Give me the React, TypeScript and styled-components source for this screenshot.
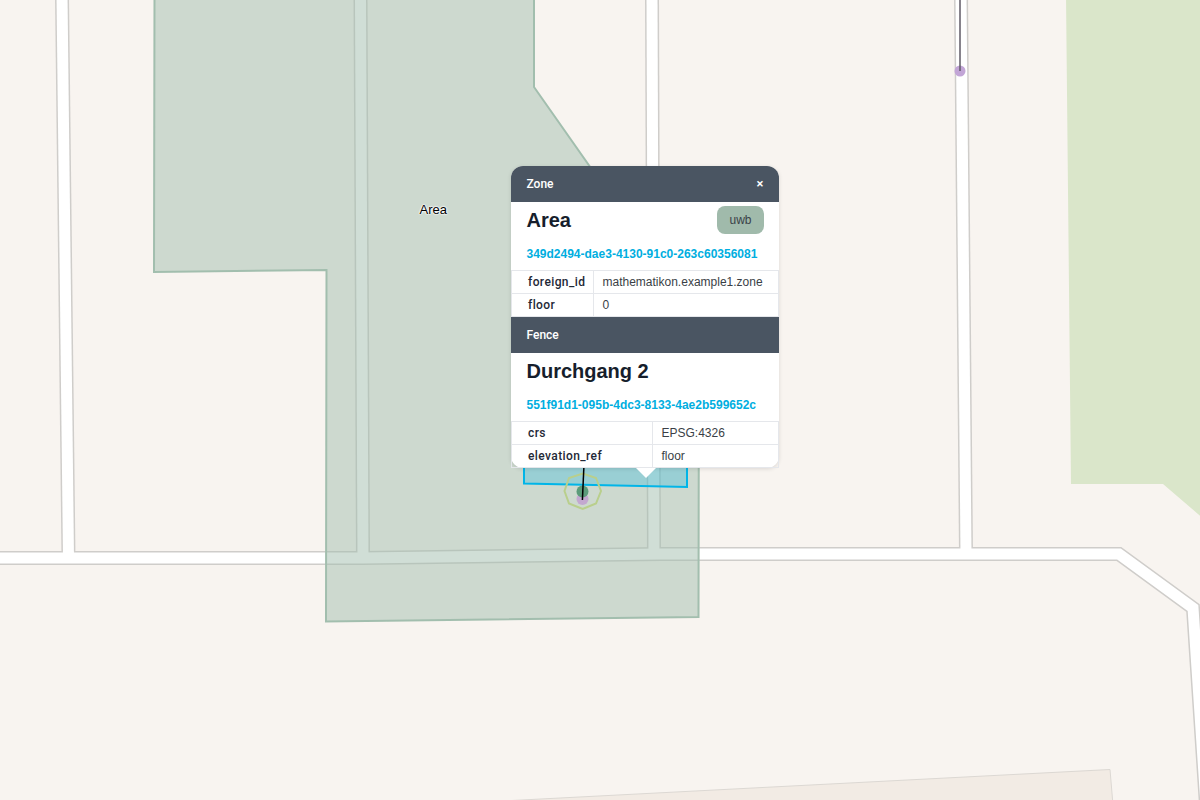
import React from 'react';
import styled, { createGlobalStyle } from 'styled-components';

const ROAD_PATHS = [
  'M62 -5 L68.5 558',
  'M360.5 -5 L363 558',
  'M652 -5 L654 555',
  'M961 -5 L966 554',
  'M-5 558 L363 558 L660 554 L1119 554 L1193 608 L1206 805',
];

const ZONE_POINTS = '154.5,-5 534,-5 534,87 699,322 698.5,617 326,621.5 326.5,270 154,272';
const OCTAGON = '582.7,473.5 596,478 601,491 596,503.5 582.7,509 569,503.5 564.5,491 569,478';

interface Attribute {
  name: string;
  value: string;
}

interface Feature {
  kind: string;
  title: string;
  id: string;
  badge?: string;
  keyWidth: number;
  closable?: boolean;
  attributes: Attribute[];
}

const FEATURES: Feature[] = [
  {
    kind: 'Zone',
    title: 'Area',
    id: '349d2494-dae3-4130-91c0-263c60356081',
    badge: 'uwb',
    keyWidth: 82,
    closable: true,
    attributes: [
      { name: 'foreign_id', value: 'mathematikon.example1.zone' },
      { name: 'floor', value: '0' },
    ],
  },
  {
    kind: 'Fence',
    title: 'Durchgang 2',
    id: '551f91d1-095b-4dc3-8133-4ae2b599652c',
    keyWidth: 141,
    attributes: [
      { name: 'crs', value: 'EPSG:4326' },
      { name: 'elevation_ref', value: 'floor' },
    ],
  },
];

const App = () => (
  <Stage>
    <GlobalStyle />
    <MapCanvas viewBox="0 0 1200 800">
      <polygon points="1066,-5 1071,484 1163,484 1205,520 1205,-5" fill="#dae6ca" />
      <polygon
        points="425,805 1110,769.5 1113,805"
        fill="#f2ebe4"
        stroke="#dcd8d3"
        strokeWidth="1"
      />
      <g fill="none" strokeLinejoin="miter">
        {ROAD_PATHS.map((d) => (
          <path key={d} d={d} stroke="#cfcdca" strokeWidth="14" />
        ))}
        {ROAD_PATHS.map((d) => (
          <path key={`${d}-fill`} d={d} stroke="#ffffff" strokeWidth="11" />
        ))}
      </g>
      <polygon points={ZONE_POINTS} fill="#a2beae" fillOpacity="0.5" />
      <polygon points={ZONE_POINTS} fill="none" stroke="#a2beae" strokeWidth="2" />
      <polygon
        points="524,430 687,430 687,487 524,483.5"
        fill="#00b5e2"
        fillOpacity="0.25"
        stroke="#00b5e8"
        strokeWidth="2"
      />
      <polygon points={OCTAGON} fill="none" stroke="#b9cf8c" strokeWidth="2" />
      <circle cx="582.5" cy="499" r="6" fill="#c3a8d0" />
      <circle cx="582.5" cy="491.5" r="6" fill="#5b9b7a" />
      <line x1="584.2" y1="460" x2="582.4" y2="500" stroke="#000000" strokeWidth="1.5" />
      <circle cx="960" cy="71" r="5.5" fill="#c2a5d6" />
      <line x1="960" y1="-5" x2="960" y2="71" stroke="#5f5a66" strokeWidth="1.5" />
    </MapCanvas>
    <MapLabel>Area</MapLabel>
    <Popup>
      {FEATURES.map((feature) => (
        <section key={feature.id}>
          <PopupHeader>
            <span>{feature.kind}</span>
            {feature.closable && <CloseButton>×</CloseButton>}
          </PopupHeader>
          <TitleRow>
            <Title>{feature.title}</Title>
            {feature.badge && <Badge>{feature.badge}</Badge>}
          </TitleRow>
          <FeatureId>{feature.id}</FeatureId>
          <AttributeTable>
            {feature.attributes.map((attribute) => (
              <AttributeRow key={attribute.name} $keyWidth={feature.keyWidth}>
                <AttributeName>{attribute.name}</AttributeName>
                <AttributeValue>{attribute.value}</AttributeValue>
              </AttributeRow>
            ))}
          </AttributeTable>
        </section>
      ))}
      <PopupTip />
    </Popup>
  </Stage>
);

const GlobalStyle = createGlobalStyle`
  html, body {
    margin: 0;
    padding: 0;
    background: #f8f4f0;
    font-family: "Liberation Sans", Arial, sans-serif;
  }
`;

const Stage = styled.div`
  position: relative;
  width: 1200px;
  height: 800px;
  overflow: hidden;
  background: #f8f4f0;
`;

const MapCanvas = styled.svg`
  display: block;
  width: 1200px;
  height: 800px;
`;

const MapLabel = styled.span`
  position: absolute;
  left: 419.5px;
  top: 201.5px;
  font-size: 13px;
  line-height: 15px;
  color: #000000;
  text-shadow: 0 0 1px #ffffff, 0 0 2px #ffffff, 0 0 2px #ffffff, 0 0 2px #ffffff;
`;

const Popup = styled.div`
  position: absolute;
  left: 511px;
  top: 166px;
  width: 268px;
  background: #ffffff;
  border-radius: 12px;
  box-shadow: 0 1px 4px rgba(0, 0, 0, 0.12);

  section:first-child > div:first-child {
    border-radius: 12px 12px 0 0;
  }
`;

const PopupTip = styled.div`
  position: absolute;
  left: 125px;
  bottom: -10px;
  width: 0;
  height: 0;
  border-left: 10px solid transparent;
  border-right: 10px solid transparent;
  border-top: 10px solid #ffffff;
`;

const PopupHeader = styled.div`
  display: flex;
  align-items: center;
  justify-content: space-between;
  height: 36px;
  padding: 0 15.5px;
  background: #4a5562;
  color: #ffffff;
  font-family: Roboto, "Liberation Sans", sans-serif;
  font-size: 12px;
  font-weight: 500;
`;

const CloseButton = styled.span`
  font-size: 13px;
  line-height: 14px;
`;

const TitleRow = styled.div`
  display: flex;
  align-items: center;
  justify-content: space-between;
  height: 36px;
  padding: 0 15px 0 15.5px;
`;

const Title = styled.h2`
  margin: 0;
  font-size: 20px;
  line-height: 28px;
  font-weight: 700;
  color: #161e2c;
`;

const Badge = styled.span`
  display: flex;
  align-items: center;
  justify-content: center;
  width: 47px;
  height: 28px;
  border-radius: 8px;
  background: #a0baab;
  color: #3a4248;
  font-size: 12px;
`;

const FeatureId = styled.div`
  height: 32px;
  padding: 9px 15.5px 0;
  box-sizing: border-box;
  font-size: 12px;
  line-height: 14px;
  font-weight: 700;
  color: #00aee0;
`;

const AttributeTable = styled.div`
  border-top: 1px solid #e5e7eb;
  border-left: 1px solid #e5e7eb;
  border-right: 1px solid #e5e7eb;
`;

const AttributeRow = styled.div<{ $keyWidth: number }>`
  display: grid;
  grid-template-columns: ${({ $keyWidth }) => $keyWidth}px 1fr;
  height: 23px;
  box-sizing: border-box;
  border-bottom: 1px solid #e5e7eb;
  font-size: 12px;
  line-height: 22px;
`;

const AttributeName = styled.div`
  padding-left: 16px;
  border-right: 1px solid #e5e7eb;
  font-family: Roboto, "Liberation Sans", sans-serif;
  font-weight: 500;
  letter-spacing: 0.4px;
  color: #1f2937;
`;

const AttributeValue = styled.div`
  padding-left: 8.5px;
  color: #3a3f46;
`;

export default App;
